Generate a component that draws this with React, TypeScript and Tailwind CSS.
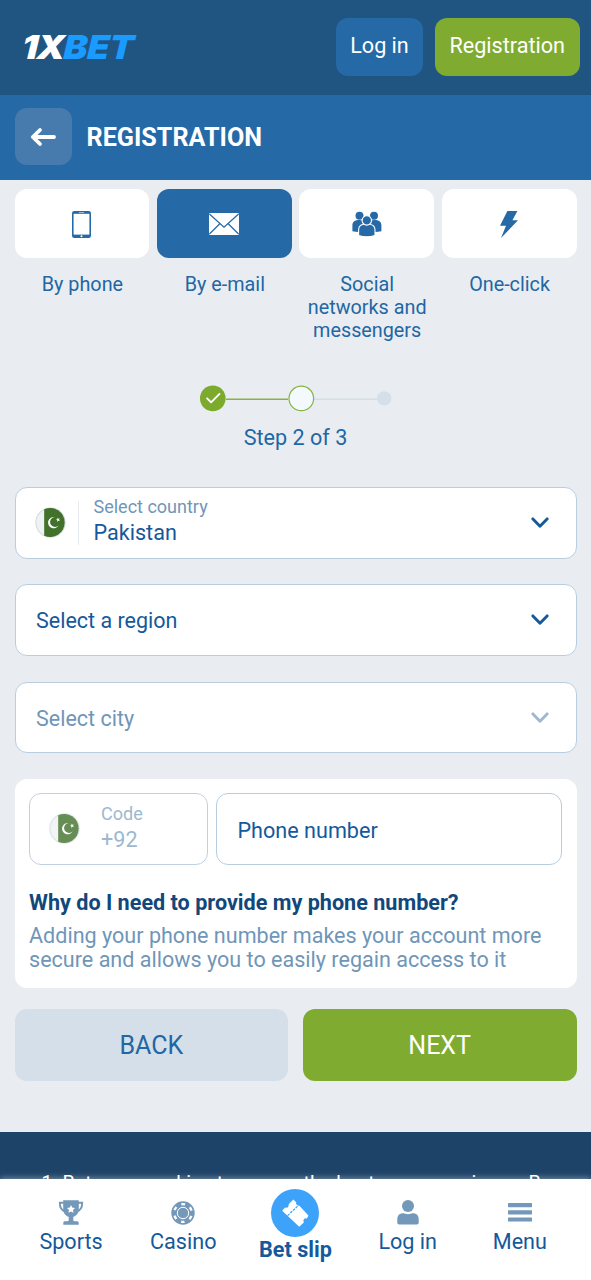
import type { ReactNode } from "react";

function Logo() {
  return (
    <div
      role="img"
      aria-label="1XBET"
      className="flex h-[26px] w-[100px] origin-left scale-x-[1.09] -skew-x-3 items-center font-['Inter'] text-[33px] leading-[26px] font-black whitespace-nowrap italic"
    >
      <span className="tracking-[-1.3px] text-white">1X</span>
      <span className="tracking-[-0.3px] text-[#1a9bff]">BET</span>
    </div>
  );
}

function ArrowLeft() {
  return (
    <svg width="26" height="20" viewBox="0 0 26 20" fill="none" stroke="#fff" strokeWidth="3.8" strokeLinecap="round" strokeLinejoin="round">
      <path d="M24 10H3M10 3L2.8 10L10 17" />
    </svg>
  );
}

function PhoneIcon() {
  return (
    <svg width="19" height="27" viewBox="0 0 18 27" preserveAspectRatio="none">
      <rect width="18" height="27" rx="2.2" fill="#2569a6" />
      <rect x="1.5" y="2.8" width="15" height="20.8" fill="#fff" />
      <rect x="6.5" y="1" width="5" height="0.8" fill="#fff" opacity=".7" />
      <circle cx="9" cy="25.2" r="1" fill="#fff" />
    </svg>
  );
}

function MailIcon() {
  return (
    <svg width="30" height="22" viewBox="0 0 30 22">
      <rect width="30" height="22" rx="1.3" fill="#fff" />
      <path d="M.4 1L15 14.2L29.6 1M.4 21L10.8 10.8M29.6 21L19.2 10.8" fill="none" stroke="#2569a6" strokeWidth="1.3" />
    </svg>
  );
}

function PeopleIcon() {
  return (
    <svg width="30" height="26" viewBox="0 0 30 26" fill="#2569a6">
      <circle cx="7.5" cy="4.7" r="4" />
      <circle cx="22" cy="4.7" r="4" />
      <path d="M.4 20.2V14.5C.4 10.5 3 9 7.4 9c3 0 5 1 6 3v8.2c-4 1-9 1-13 0zM29.4 20.2v-5.7c0-4-2.6-5.5-7-5.5-3 0-5 1-6 3v8.2c4 1 9 1 13 0z" />
      <g stroke="#fff" strokeWidth="1.1">
        <path d="M6.6 24.4v-5.7c0-4.2 3-5.7 8.2-5.7s8.2 1.5 8.2 5.7v5.7c-4.7 1.7-11.7 1.7-16.4 0z" />
        <circle cx="14.8" cy="9.4" r="4.7" />
      </g>
    </svg>
  );
}

function BoltIcon() {
  return (
    <svg width="18" height="27" viewBox="0 0 18 27" fill="#2569a6">
      <path d="M7.4 0H17.4L12.4 9.3H18L1 27L6 14.7H0Z" />
    </svg>
  );
}

function Flag({ faded = false }: { faded?: boolean }) {
  return (
    <svg width="31" height="31" viewBox="0 0 31 31" className={faded ? "mb-[2px] shrink-0 opacity-80" : "mb-[2px] shrink-0"}>
      <circle cx="15.5" cy="15.5" r="14.6" fill="#eff2f3" stroke="#d5dee4" strokeWidth="1.2" />
      <path d="M9.2 2.3A14.5 14.5 0 1 1 9.2 28.7Z" fill="#41712a" />
      <path d="M20 10.1A5.7 5.7 0 1 0 24 17.8A4.9 4.9 0 1 1 20 10.1Z" fill="#fff" />
      <path d="M22.5 10.5l.9 1.3 1.5-.3-.9 1.3.8 1.3-1.5-.4-1 1.2v-1.6l-1.5-.6 1.6-.5z" fill="#fff" />
    </svg>
  );
}

function Chevron({ faded = false }: { faded?: boolean }) {
  return (
    <svg width="18" height="12" viewBox="0 0 18 12" fill="none" stroke={faded ? "#9db8d0" : "#14599b"} strokeWidth="2.9" strokeLinecap="round" strokeLinejoin="round">
      <path d="M1.9 1.9L9 9.2L16.1 1.9" />
    </svg>
  );
}

function Stepper() {
  return (
    <svg width="192" height="27" viewBox="0 0 192 27">
      <path d="M26 14.3H88" stroke="#85b442" strokeWidth="1.4" />
      <path d="M114 14.3H178" stroke="#d2dfe5" strokeWidth="1.4" />
      <circle cx="12.8" cy="13.4" r="12.8" fill="#7caa2c" />
      <path d="M7.1 13.3L11.1 17.3L19.5 8.9" fill="none" stroke="#fff" strokeWidth="1.9" strokeLinecap="round" strokeLinejoin="round" />
      <circle cx="101.3" cy="13.4" r="12.3" fill="#f3f9fc" stroke="#85b442" strokeWidth="1.2" />
      <circle cx="184.2" cy="13.4" r="7.2" fill="#d4dfe9" />
    </svg>
  );
}

function TrophyIcon() {
  return (
    <svg width="26" height="25" viewBox="0 0 26 25">
      <path d="M6 2.8H1.8C1.8 8.2 3.4 10.8 7.8 11.6M20 2.8h4.2C24.2 8.2 22.6 10.8 18.2 11.6" fill="none" stroke="#7398b9" strokeWidth="1.9" />
      <path d="M5.2.2h15.6v8.2c0 5-2.5 7.3-5.5 8.4v3.1c0 1 .8 1.3 2.2 1.3h1.6c1 0 1.6.6 1.6 1.5v2H5.3v-2c0-.9.6-1.5 1.6-1.5h1.6c1.4 0 2.2-.3 2.2-1.3v-3.1c-3-1.1-5.5-3.4-5.5-8.4z" fill="#7398b9" />
      <path d="M13 5l1.2 2.6 2.8.4-2 2 .5 2.8-2.5-1.4-2.5 1.4.5-2.8-2-2 2.8-.4z" fill="#fff" />
    </svg>
  );
}

function ChipIcon() {
  return (
    <svg width="24" height="24" viewBox="0 0 24 24">
      <circle cx="12" cy="12" r="11.7" fill="#7398b9" />
      <circle cx="12" cy="12" r="8.9" fill="none" stroke="#fff" strokeWidth="2.3" strokeDasharray="3.8 5.52" strokeDashoffset="1.9" transform="rotate(90 12 12)" />
      <circle cx="12" cy="12" r="5.7" fill="none" stroke="#fff" strokeWidth="1" />
    </svg>
  );
}

function TicketIcon() {
  return (
    <svg width="48" height="48" viewBox="0 0 48 48">
      <circle cx="24" cy="24" r="24" fill="#3da2fa" />
      <path d="M22.4 10.4L25.2 13.3Q24.4 16.6 28.2 16.4L37.4 26.6L36 29.4Q33 28.8 32.4 31.2L32.8 33.4L28.2 37.8L11.2 21.8L14 18.6Q17.4 19.4 17.6 16.6L17.8 14.9Z" fill="#fff" strokeLinejoin="round" />
      <path d="M16.6 26.6L27.8 16" fill="none" stroke="#3da2fa" strokeWidth="1.2" strokeDasharray="2.6 1.1" />
    </svg>
  );
}

function UserIcon() {
  return (
    <svg width="22" height="25" viewBox="0 0 22 25" fill="#7398b9">
      <circle cx="11" cy="6.1" r="6" />
      <path d="M.3 22.5v-3.2c0-4 2.5-6 5.8-6 1.8 0 2.8 1 4.9 1s3.1-1 4.9-1c3.3 0 5.8 2 5.8 6v3.2c0 1.3-.7 2-2 2H2.3c-1.3 0-2-.7-2-2z" />
    </svg>
  );
}

function MenuIcon() {
  return (
    <svg width="24" height="19" viewBox="0 0 24 19" fill="#7398b9">
      <rect width="24" height="4.2" rx=".6" />
      <rect y="7.2" width="24" height="4.2" rx=".6" />
      <rect y="14.4" width="24" height="4.2" rx=".6" />
    </svg>
  );
}

function Method({ icon, label, active = false }: { icon: ReactNode; label: string; active?: boolean }) {
  return (
    <div className="flex flex-col items-center">
      <button className={`flex h-[69px] w-full items-center justify-center rounded-xl pt-[1px] ${active ? "bg-[#2569a6]" : "bg-white"}`}>
        {icon}
      </button>
      <span className="mt-[15px] ml-[1px] w-[128px] text-center text-[19.8px] leading-[23px] text-[#2266a4]">{label}</span>
    </div>
  );
}

function NavItem({ icon, label }: { icon: ReactNode; label: string }) {
  return (
    <button className="flex flex-col items-center pt-[20px]">
      <span className="flex h-[27px] items-center">{icon}</span>
      <span className="mt-[3px] text-[21.6px] leading-[26px] text-[#14599b]">{label}</span>
    </button>
  );
}

export default function App() {
  return (
    <div className="flex h-[1280px] w-[591px] flex-col overflow-hidden bg-[#e9edf2] font-['Roboto',sans-serif] whitespace-nowrap">
      <header className="flex h-[95px] shrink-0 items-start justify-between bg-[#205582] pt-[18px] pr-[11.5px] pl-[22px]">
        <div className="pt-[16px]">
          <Logo />
        </div>
        <div className="flex gap-[12px] text-[21.6px] text-white">
          <button className="h-[58px] w-[87px] rounded-xl bg-[#2569a6] pb-[1px]">Log in</button>
          <button className="h-[58px] w-[144.5px] rounded-xl bg-[#7fac30] pb-[1px]">Registration</button>
        </div>
      </header>

      <div className="flex h-[85px] shrink-0 items-center bg-[#2569a6] pl-[14.5px]">
        <button className="mb-[2px] flex size-[57px] items-center justify-center rounded-xl bg-[#477bae]">
          <ArrowLeft />
        </button>
        <h1 className="pl-[15px] text-[25.2px] leading-[30px] font-bold text-white">REGISTRATION</h1>
      </div>

      <main className="flex flex-col px-[14.5px] pt-[9px]">
        <div className="grid h-[153px] grid-cols-4 gap-[7.5px] whitespace-normal">
          <Method icon={<PhoneIcon />} label="By phone" />
          <Method icon={<MailIcon />} label="By e-mail" active />
          <Method icon={<PeopleIcon />} label="Social networks and messengers" />
          <Method icon={<BoltIcon />} label="One-click" />
        </div>

        <div className="mt-[43px] flex flex-col items-center">
          <Stepper />
          <p className="mt-[13px] text-[21.6px] leading-[26px] text-[#2266a4]">Step 2 of 3</p>
        </div>

        <div className="mt-[36px] flex h-[72px] items-center rounded-xl border-[1.5px] border-[#b8cddd] bg-white pr-[27px] pl-[19px]">
          <Flag />
          <span className="ml-[12px] h-[44px] w-px bg-[#e5ebef]" />
          <div className="ml-[15px] flex flex-1 flex-col pb-[5px]">
            <span className="text-[18px] leading-[22px] text-[#6f96b8]">Select country</span>
            <span className="mt-[2px] text-[21.6px] leading-[26px] text-[#14599b]">Pakistan</span>
          </div>
          <Chevron />
        </div>

        <div className="mt-[25px] flex h-[72px] items-center justify-between rounded-xl border-[1.5px] border-[#b8cddd] bg-white pr-[27px] pl-[20.5px]">
          <span className="pt-[2px] text-[21.5px] leading-[26px] text-[#14599b]">Select a region</span>
          <Chevron />
        </div>

        <div className="mt-[26px] flex h-[71px] items-center justify-between rounded-xl border-[1.5px] border-[#b8cddd] bg-white pr-[27px] pl-[20.5px]">
          <span className="pt-[3px] text-[21.5px] leading-[26px] text-[#6f96b8]">Select city</span>
          <Chevron faded />
        </div>

        <section className="mt-[26px] flex h-[209px] flex-col rounded-xl bg-white px-[14.5px] pt-[14px]">
          <div className="flex h-[72px] gap-[8px]">
            <div className="flex w-[179px] items-center rounded-xl border-[1.5px] border-[#c1d1e2] pl-[19px]">
              <Flag faded />
              <div className="ml-[21px] flex flex-col pb-[3px] text-[#9db8d0]">
                <span className="text-[18px] leading-[22px]">Code</span>
                <span className="mt-[2px] text-[21.6px] leading-[26px]">+92</span>
              </div>
            </div>
            <div className="flex flex-1 items-center rounded-xl border-[1.5px] border-[#b8cddd] pt-[5px] pl-[20.5px] text-[21.6px] text-[#14599b]">
              Phone number
            </div>
          </div>
          <h2 className="mt-[25px] text-[21.6px] leading-[26px] font-bold text-[#11477a]">
            Why do I need to provide my phone number?
          </h2>
          <p className="mt-[8px] text-[21.57px] leading-[24px] text-[#6f96b8]">
            Adding your phone number makes your account more
            <br />
            secure and allows you to easily regain access to it
          </p>
        </section>

        <div className="mt-[21px] grid h-[72px] grid-cols-2 gap-[14.5px] text-[25px]">
          <button className="rounded-xl bg-[#d4dfe9] pt-[2px] text-[#2266a4]">BACK</button>
          <button className="rounded-xl bg-[#7fac30] pt-[2px] text-white">NEXT</button>
        </div>
      </main>

      <div className="mt-[51px] h-[47px] shrink-0 overflow-hidden bg-[#1e4368] pt-[40px] pl-[41.5px] text-[19.8px] leading-[24px] text-white">
        1xBet uses cookies to ensure the best user experience. By
      </div>

      <nav className="relative grid h-[101px] shrink-0 grid-cols-5 bg-white px-[15px] shadow-[0_-1px_6px_rgba(255,255,255,0.4)]">
        <NavItem icon={<TrophyIcon />} label="Sports" />
        <NavItem icon={<ChipIcon />} label="Casino" />
        <button className="flex flex-col items-center pt-[10px]">
          <TicketIcon />
          <span className="text-[21.6px] leading-[25px] font-bold text-[#14599b]">Bet slip</span>
        </button>
        <NavItem icon={<UserIcon />} label="Log in" />
        <NavItem icon={<MenuIcon />} label="Menu" />
      </nav>
    </div>
  );
}
